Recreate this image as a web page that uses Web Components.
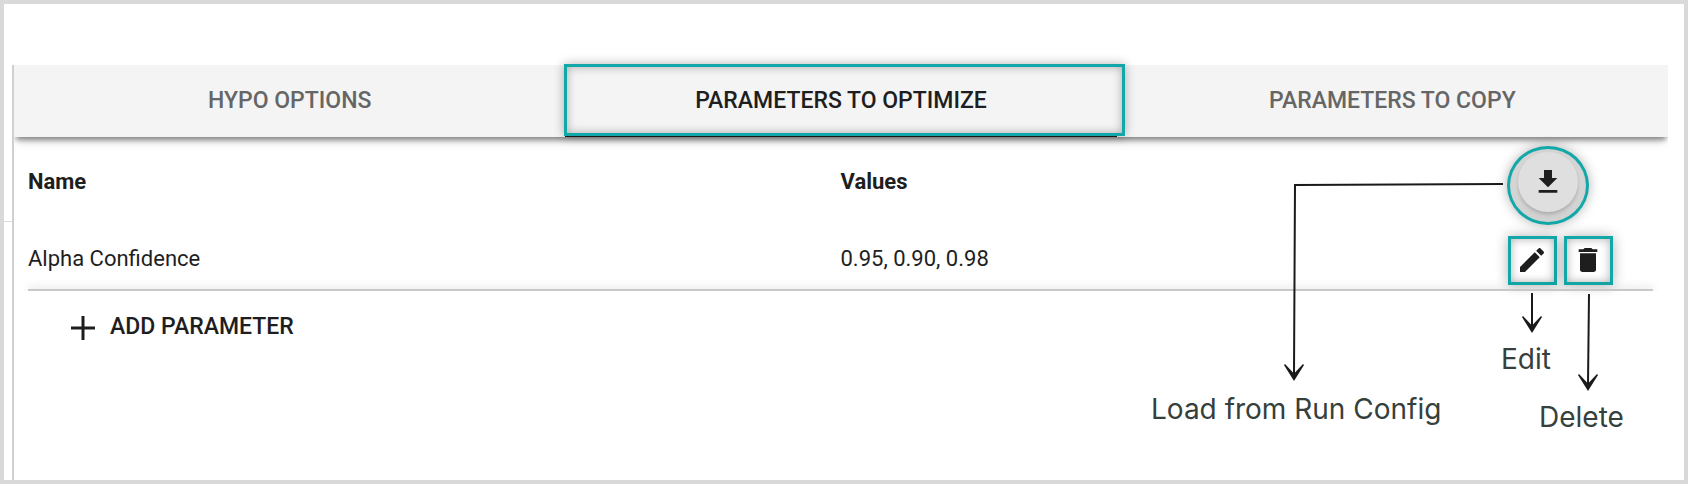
<!DOCTYPE html>
<html lang="en">
<head>
<meta charset="utf-8">
<title>Parameters to optimize</title>
<style>
    body {
        margin: 0;
        font-family: Roboto, "Liberation Sans", sans-serif;
        font-size: 22px;
        line-height: 28px;
        color: #1e1e1e;
        --teal: #12a8a9;
        --line: #c8c8c8;
        --button-size: 23px;
    }
</style>
</head>
<body>
<app-frame>
    <tab-bar>
        <tab-item>HYPO OPTIONS</tab-item>
        <tab-item active>PARAMETERS TO OPTIMIZE</tab-item>
        <tab-item>PARAMETERS TO COPY</tab-item>
    </tab-bar>
    <param-table></param-table>
    <add-button>ADD PARAMETER</add-button>
    <help-notes slot="notes"></help-notes>
</app-frame>

<script>
const icons = {
    download: 'M5,20H19V18H5M19,9H15V3H9V9H5L12,16L19,9Z',
    edit: 'M20.71,7.04C21.1,6.65 21.1,6 20.71,5.63L18.37,3.29C18,2.9 17.35,2.9 16.96,3.29L15.12,5.12L18.87,8.87M3,17.25V21H6.75L17.81,9.93L14.06,6.18L3,17.25Z',
    delete: 'M19,4H15.5L14.5,3H9.5L8.5,4H5V6H19M6,19A2,2 0 0,0 8,21H16A2,2 0 0,0 18,19V7H6V19Z'
};

function render (host, html) {
    const template = document.createElement('template');
    template.innerHTML = html;
    const shadow = host.attachShadow({ mode: 'open' });
    shadow.appendChild(template.content.cloneNode(true));
}

class AppFrame extends HTMLElement {
    constructor () {
        super();
        render(this, `
            <style>
                :host {
                    display: flex;
                    box-sizing: border-box;
                    position: relative;
                    min-height: 100vh;
                    border: 4px solid #d9d9d9;
                    background: #fff;
                }
                .gutter {
                    flex: none;
                    width: 8px;
                    height: 218px;
                    box-sizing: border-box;
                    border-bottom: 1px solid #dcdcdc;
                }
                main {
                    flex: 1;
                    margin: 61px 16px 0 0;
                    border-left: 2px solid #d0d0d0;
                }
            </style>
            <div class="gutter"></div>
            <main><slot></slot></main>
            <slot name="notes"></slot>
        `);
    }
}

class TabBar extends HTMLElement {
    constructor () {
        super();
        render(this, `
            <style>
                :host {
                    display: grid;
                    grid-template-columns: repeat(3, 1fr);
                    height: 72px;
                    background: #f4f4f4;
                    box-shadow: 0 5px 5px -2px rgba(0, 0, 0, 0.4), 0 8px 10px -4px rgba(0, 0, 0, 0.16);
                    clip-path: inset(-12px 0 -20px 0);
                }
            </style>
            <slot></slot>
        `);
    }

    connectedCallback () {
        this.setAttribute('role', 'tablist');
    }
}

class TabItem extends HTMLElement {
    constructor () {
        super();
        render(this, `
            <style>
                :host {
                    display: block;
                    position: relative;
                }
                button {
                    width: 100%;
                    height: 100%;
                    padding: 2px 0 0;
                    border: 0;
                    border-bottom: 2px solid transparent;
                    background: none;
                    font: inherit;
                    font-size: var(--button-size);
                    font-weight: 500;
                    color: #666;
                    cursor: pointer;
                }
                :host([active]) button {
                    color: #1e1e1e;
                    border-color: #1e1e1e;
                }
                /* highlight box, a little wider than the tab */
                :host([active])::after {
                    content: "";
                    position: absolute;
                    inset: -1px -8px 1px -1px;
                    border: 3px solid var(--teal);
                    box-shadow: 0 0 10px rgba(0, 0, 0, 0.3), inset 0 0 10px rgba(0, 0, 0, 0.3);
                    pointer-events: none;
                    z-index: 1;
                }
            </style>
            <button type="button" role="tab"><slot></slot></button>
        `);
    }
}

class IconButton extends HTMLElement {
    constructor () {
        super();
        render(this, `
            <style>
                :host {
                    display: block;
                    position: relative;
                    width: 50px;
                    height: 50px;
                }
                :host([round]) {
                    width: 60px;
                    height: 60px;
                    margin-left: 11px;
                }
                button {
                    display: flex;
                    align-items: center;
                    justify-content: center;
                    position: relative;
                    z-index: 2;
                    width: 100%;
                    height: 100%;
                    padding: 0;
                    border: 0;
                    background: none;
                    color: inherit;
                    cursor: pointer;
                }
                :host([round]) button {
                    border-radius: 50%;
                    background: #dfdfdf;
                    box-shadow: 0 4px 6px rgba(0, 0, 0, 0.14), 0 2px 3px rgba(0, 0, 0, 0.08);
                }
                svg {
                    width: 32px;
                    height: 32px;
                    fill: currentColor;
                }
                :host::after {
                    content: "";
                    position: absolute;
                    inset: 1px 0 0 1px;
                    border: 3px solid var(--teal);
                    box-shadow: 0 0 12px rgba(0, 0, 0, 0.3), inset 0 0 10px rgba(0, 0, 0, 0.3);
                    pointer-events: none;
                }
                :host([round])::after {
                    inset: -6px -11px -13px -11px;
                    border-radius: 50%;
                    background: #dadada;
                    box-shadow: 0 0 12px rgba(0, 0, 0, 0.3), inset 0 0 6px rgba(0, 0, 0, 0.08);
                }
            </style>
            <button type="button">
                <svg viewBox="0 0 24 24"><path/></svg>
            </button>
        `);
    }

    connectedCallback () {
        this.shadowRoot.querySelector('path').setAttribute('d', icons[this.getAttribute('icon')]);
        this.shadowRoot.querySelector('button').setAttribute('aria-label', this.getAttribute('label'));
    }
}

class ParamTable extends HTMLElement {
    constructor () {
        super();
        render(this, `
            <style>
                :host {
                    display: block;
                    position: relative;
                    margin: 0 15px 0 14px;
                }
                table {
                    width: 100%;
                    table-layout: fixed;
                    border-collapse: collapse;
                }
                th, td {
                    padding: 0;
                    text-align: left;
                }
                th {
                    height: 90px;
                    font-weight: 700;
                }
                td {
                    height: 60px;
                    padding-top: 2px;
                }
                .name {
                    width: 50%;
                }
                .tools {
                    width: 146px;
                }
                .actions {
                    display: flex;
                    gap: 6px;
                    padding-top: 2px;
                }
                /* shadow is only seen above the rule */
                .rule {
                    height: 2px;
                    background: var(--line);
                    box-shadow: 0 0 10px rgba(0, 0, 0, 0.3);
                    clip-path: inset(-10px -12px 0 -12px);
                }
            </style>
            <table>
                <thead>
                    <tr>
                        <th class="name">Name</th>
                        <th>Values</th>
                        <th class="tools"><icon-button round icon="download" label="Load from Run Config"></icon-button></th>
                    </tr>
                </thead>
                <tbody>
                    <tr>
                        <td>Alpha Confidence</td>
                        <td>0.95, 0.90, 0.98</td>
                        <td>
                            <div class="actions">
                                <icon-button icon="edit" label="Edit"></icon-button>
                                <icon-button icon="delete" label="Delete"></icon-button>
                            </div>
                        </td>
                    </tr>
                </tbody>
            </table>
            <div class="rule"></div>
        `);
    }
}

class AddButton extends HTMLElement {
    constructor () {
        super();
        render(this, `
            <style>
                :host {
                    display: block;
                    padding: 19px 0 0 53px;
                }
                button {
                    display: flex;
                    align-items: center;
                    gap: 11px;
                    padding: 0;
                    border: 0;
                    background: none;
                    font: inherit;
                    font-size: var(--button-size);
                    font-weight: 500;
                    color: inherit;
                    cursor: pointer;
                }
                svg {
                    width: 32px;
                    height: 32px;
                    padding-top: 2px;
                    fill: currentColor;
                }
            </style>
            <button type="button">
                <svg viewBox="0 0 32 32"><path d="M14.500 4h3v10.500h10.500v3H17.500v10.500h-3V17.500H4v-3h10.500z"/></svg>
                <slot></slot>
            </button>
        `);
    }
}

// Arrows and captions drawn over the page, pinned to the right edge
class HelpNotes extends HTMLElement {
    constructor () {
        super();
        render(this, `
            <style>
                :host {
                    position: absolute;
                    top: 0;
                    right: 0;
                    width: 560px;
                    height: 476px;
                    pointer-events: none;
                    font-family: Inter, "Liberation Sans", sans-serif;
                    font-size: 28px;
                    line-height: 36px;
                    color: #35403d;
                }
                svg {
                    position: absolute;
                    inset: 0;
                    fill: #1a1a1a;
                }
                .line {
                    fill: none;
                    stroke: #1a1a1a;
                    stroke-width: 2;
                }
                span {
                    position: absolute;
                    white-space: nowrap;
                }
                .load { left: 27px; top: 387px; }
                .edit { left: 377px; top: 337px; }
                .delete { left: 415px; top: 395px; }
            </style>
            <svg width="560" height="476" viewBox="0 0 560 476">
                <defs>
                    <path id="head" d="M0 0L-10 -16L-9 -17L-1 -8.500H1L9 -17L10 -16Z"/>
                </defs>
                <path class="line" d="M379 180L171 181L170 370"/>
                <use href="#head" x="170" y="377"/>
                <path class="line" d="M408 289V322"/>
                <use href="#head" x="408" y="329"/>
                <path class="line" d="M465 290L464 380"/>
                <use href="#head" x="464" y="387"/>
            </svg>
            <span class="load">Load from Run Config</span>
            <span class="edit">Edit</span>
            <span class="delete">Delete</span>
        `);
    }
}

customElements.define('app-frame', AppFrame);
customElements.define('tab-bar', TabBar);
customElements.define('tab-item', TabItem);
customElements.define('icon-button', IconButton);
customElements.define('param-table', ParamTable);
customElements.define('add-button', AddButton);
customElements.define('help-notes', HelpNotes);
</script>
</body>
</html>
